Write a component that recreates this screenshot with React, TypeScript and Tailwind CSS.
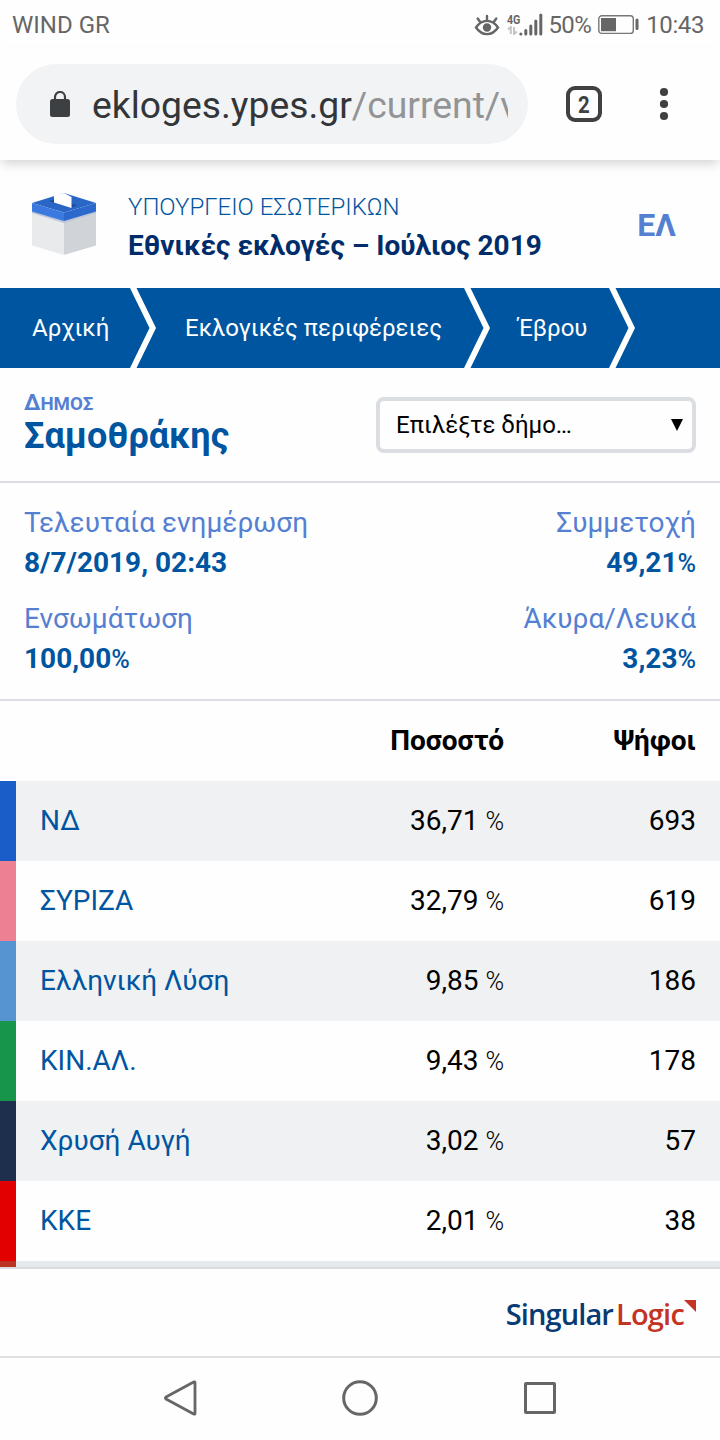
import { ReactNode, memo } from 'react'

interface Party {
    name: string
    percent: string
    votes: string
    color: string
}

const parties: Party[] = [
    { name: 'ΝΔ', percent: '36,71', votes: '693', color: 'bg-[#1a5cc8]' },
    { name: 'ΣΥΡΙΖΑ', percent: '32,79', votes: '619', color: 'bg-[#ee8094]' },
    {
        name: 'Ελληνική Λύση',
        percent: '9,85',
        votes: '186',
        color: 'bg-[#5694d1]',
    },
    { name: 'ΚΙΝ.ΑΛ.', percent: '9,43', votes: '178', color: 'bg-[#17954b]' },
    { name: 'Χρυσή Αυγή', percent: '3,02', votes: '57', color: 'bg-[#1e2e4d]' },
    { name: 'ΚΚΕ', percent: '2,01', votes: '38', color: 'bg-[#e30000]' },
]

const StatusBar = () => (
    <div className="flex h-12 items-center justify-between pt-px pr-4 pl-3 text-[24px] text-[#666]">
        <span>WIND GR</span>
        <div className="flex items-center">
            <svg
                width="26"
                height="24"
                viewBox="0 0 26 24"
                fill="none"
                stroke="#666"
                strokeWidth="2.4"
                strokeLinecap="round"
            >
                <path d="M2 14.5C8 5.7 18 5.7 24 14.5C18 23.3 8 23.3 2 14.5Z" />
                <path d="M13 7.5V3M6.2 9L3.7 5.5M19.8 9L22.3 5.5" />
                <circle cx="13" cy="14.5" r="4.2" fill="#666" stroke="none" />
            </svg>
            <div className="ml-[7px] flex h-6 w-[14px] flex-col">
                <span className="origin-left scale-x-[0.82] text-[13px] leading-[13px] font-bold">
                    4G
                </span>
                <svg
                    width="12"
                    height="9"
                    viewBox="0 0 12 9"
                    fill="none"
                    stroke="#c4c4c4"
                    strokeWidth="2"
                >
                    <path d="M1 3.5L3.8 1V8M7 1V8L9.8 5.5" />
                </svg>
            </div>
            <svg
                width="24"
                height="24"
                viewBox="0 0 24 24"
                stroke="#666"
                strokeWidth="3"
                strokeLinecap="round"
                overflow="visible"
            >
                <path d="M-0.2 21H-0.1M4.8 17.5V21M9.8 13V21M14.8 8V21M19.8 2V21" />
            </svg>
            <span className="ml-[3px] tracking-[-0.6px]">50%</span>
            <svg
                className="ml-[7px]"
                width="41"
                height="20"
                viewBox="0 0 41 20"
                fill="none"
            >
                <rect
                    x="0.8"
                    y="0.8"
                    width="34.5"
                    height="17.6"
                    rx="3"
                    stroke="#777"
                    strokeWidth="1.4"
                />
                <rect x="3" y="3" width="15" height="13.2" fill="#666" />
                <path
                    d="M39 5V13.5"
                    stroke="#666"
                    strokeWidth="3"
                    strokeLinecap="round"
                />
            </svg>
            <span className="ml-[7px] tracking-[-0.4px]">10:43</span>
        </div>
    </div>
)

const AddressBar = () => (
    <div className="relative z-10 flex h-28 items-start bg-[#fefefe] px-4 pt-4 shadow-[0_6px_10px_-2px_rgba(0,0,0,0.16)]">
        <div className="flex h-20 w-[512px] items-center rounded-full bg-[#f1f3f4] pr-5 pl-[34px]">
            <svg width="20" height="26" viewBox="0 0 20 26" fill="none">
                <rect y="8" width="20" height="18" rx="2.5" fill="#3c4043" />
                <path
                    d="M5 9V6a5 5 0 0 1 10 0V9"
                    stroke="#3c4043"
                    strokeWidth="2.2"
                />
            </svg>
            <div className="mt-px ml-[22px] flex-1 overflow-hidden text-[37.3px] leading-[48px] whitespace-nowrap text-[#333639]">
                ekloges.ypes.gr
                <span className="text-[#929496]">/current/v</span>
            </div>
        </div>
        <div className="mt-[22px] ml-[38px] flex h-9 w-9 items-center justify-center rounded-[9px] border-4 border-[#404040] pt-0.5 text-[24px] font-bold text-[#404040]">
            <span className="scale-x-[0.85]">2</span>
        </div>
        <svg
            className="mt-[22px] ml-[58px]"
            width="8"
            height="36"
            viewBox="0 0 8 36"
            fill="#404040"
            overflow="visible"
        >
            <circle cx="4" cy="6" r="4.1" />
            <circle cx="4" cy="18" r="4.1" />
            <circle cx="4" cy="30" r="4.1" />
        </svg>
    </div>
)

const BallotBox = () => (
    <svg width="64" height="64" viewBox="0 0 64 64">
        <path d="M0 18L32 28V62L0 52.500Z" fill="#e8eaec" />
        <path d="M64 18L32 28V62L64 52.500Z" fill="#d0d4d8" />
        <path d="M0 18L32 27L64 18V20L32 30L0 20Z" fill="#bac5da" />
        <path d="M32 0L64 10L32 19.500L0 10Z" fill="#2a66c6" />
        <path d="M0 10L32 19.500V28L0 18.500Z" fill="#3c79df" />
        <path d="M64 10L32 19.500V28L64 18.500Z" fill="#2d68cd" />
        <path d="M17 8L22 6.500L45 12L40 14.500Z" fill="#1e4a9b" />
        <path d="M22 2.500L32 0L39.500 4V15L22 9.500Z" fill="#fff" />
    </svg>
)

const SiteHeader = () => (
    <div className="flex h-32 items-start px-8">
        <div className="mt-[33px]">
            <BallotBox />
        </div>
        <div className="ml-8 flex-1 pt-[31px]">
            <div className="text-[24px] leading-8 font-light text-[#0055a0]">
                ΥΠΟΥΡΓΕΙΟ ΕΣΩΤΕΡΙΚΩΝ
            </div>
            <h1 className="mt-[3px] text-[28px] leading-10 font-bold whitespace-nowrap text-[#002d6a]">
                Εθνικές εκλογές – Ιούλιος 2019
            </h1>
        </div>
        <span className="mt-[45px] mr-3 text-[32px] leading-10 font-bold text-[#5580d2]">
            ΕΛ
        </span>
    </div>
)

const Chevron = () => (
    <svg
        className="shrink-0"
        width="26"
        height="80"
        viewBox="0 0 26 80"
        fill="#fff"
    >
        <path d="M0 0H6.500L26 40L6.500 80H0L19.500 40Z" />
    </svg>
)

const Breadcrumbs = () => (
    <nav className="flex h-20 items-center bg-[#0055a0] text-[24px] whitespace-nowrap text-white">
        <span className="w-[130px] pl-8">Αρχική</span>
        <Chevron />
        <span className="w-[308px] pl-[29px]">Εκλογικές περιφέρειες</span>
        <Chevron />
        <span className="w-[119px] pl-7">Έβρου</span>
        <Chevron />
    </nav>
)

const Municipality = () => (
    <div className="flex h-[115px] items-start justify-between border-b-2 border-[#dadee2] px-6">
        <div className="pt-[22px]">
            <div className="text-[22.4px] leading-6 font-bold text-[#5580d2]">
                Δ<span className="text-[18.7px]">ΗΜΟΣ</span>
            </div>
            <h2 className="-mt-px text-[36px] leading-[42px] font-bold text-[#0055a0]">
                Σαμοθράκης
            </h2>
        </div>
        <div className="mt-[29px] flex h-14 w-80 items-center justify-between rounded-lg border-4 border-[#dadee2] pr-[9px] pl-4 text-[24px] text-black">
            <span>Επιλέξτε δήμο…</span>
            <svg width="12" height="12" viewBox="0 0 12 12">
                <path d="M0 0H12L6 12Z" />
            </svg>
        </div>
    </div>
)

const Stat = ({
    label,
    children,
    right,
}: {
    label: string
    children: ReactNode
    right?: boolean
}) => (
    <div className={right ? 'text-right' : ''}>
        <div className="text-[28px] leading-10 text-[#5580d2]">{label}</div>
        <div className="text-[28px] leading-10 font-bold text-[#0055a0]">
            {children}
        </div>
    </div>
)

const Stats = () => (
    <div className="grid h-[218px] grid-cols-2 content-start gap-y-[15px] border-b-2 border-[#dadee2] px-6 pt-5">
        <Stat label="Τελευταία ενημέρωση">8/7/2019, 02:43</Stat>
        <Stat label="Συμμετοχή" right>
            49,21
            <span className="text-[25.2px] font-medium">%</span>
        </Stat>
        <Stat label="Ενσωμάτωση">
            100,00
            <span className="text-[25.2px] font-medium">%</span>
        </Stat>
        <Stat label="Άκυρα/Λευκά" right>
            3,23
            <span className="text-[25.2px] font-medium">%</span>
        </Stat>
    </div>
)

const Results = memo(() => (
    <div className="text-[28px] leading-10">
        <div className="flex h-20 items-center pr-6 text-right font-bold text-black">
            <span className="w-[504px]">Ποσοστό</span>
            <span className="flex-1">Ψήφοι</span>
        </div>
        {parties.map((party) => (
            <div
                key={party.name}
                className="flex h-20 items-center pr-6 text-black odd:bg-[#fefefe] even:bg-[#eff1f3]"
            >
                <div className={`h-full w-4 ${party.color}`} />
                <span className="w-[260px] pl-6 text-[#0055a0]">
                    {party.name}
                </span>
                <span className="w-[228px] text-right">
                    {party.percent}{' '}
                    <span className="text-[25.2px] font-light">%</span>
                </span>
                <span className="flex-1 text-right">{party.votes}</span>
            </div>
        ))}
        {/* Top of the next row, under the footer */}
        <div className="flex h-1.5 bg-[#e6e9eb]">
            <div className="w-4 bg-[#b93222]" />
        </div>
    </div>
))

Results.displayName = 'Results'

const Footer = () => (
    <div className="flex h-[89px] justify-end border-t-2 border-[#d9dde0] pr-6">
        <div className="flex pt-[25px] font-['Open_Sans',sans-serif] text-[29px] leading-10 font-semibold">
            <span className="tracking-[-0.9px] text-[#083a74]">Singular</span>
            <span className="ml-[3px] tracking-[-0.8px] text-[#c43424]">
                Logic
            </span>
        </div>
        <svg className="mt-[31px]" width="12" height="12" viewBox="0 0 12 12">
            <path d="M0 0H12V12Z" fill="#c43424" />
        </svg>
    </div>
)

const SystemNav = () => (
    <div className="flex h-[84px] justify-center gap-36 border-t-2 border-[#e0e0e0] pt-[22px]">
        <svg
            width="36"
            height="36"
            viewBox="0 0 36 36"
            fill="none"
            stroke="#666"
            strokeWidth="2.8"
            strokeLinejoin="round"
        >
            <path d="M33 2.500C33 1.800 32.300 1.600 31.700 2L4 17Q3 18 4 19L31.700 34C32.300 34.400 33 34.200 33 33.500Z" />
        </svg>
        <svg
            width="36"
            height="36"
            viewBox="0 0 36 36"
            fill="none"
            stroke="#666"
            strokeWidth="3"
        >
            <circle cx="18" cy="18" r="16.3" />
        </svg>
        <svg
            width="36"
            height="36"
            viewBox="0 0 36 36"
            fill="none"
            stroke="#666"
            strokeWidth="3"
            strokeLinejoin="round"
        >
            <rect x="3.500" y="3.500" width="29" height="29" rx="0.5" />
        </svg>
    </div>
)

export default function App() {
    return (
        <div className="h-[1440px] w-[720px] overflow-hidden bg-[#fefefe] font-[Roboto,'Noto_Sans',sans-serif]">
            <StatusBar />
            <AddressBar />
            <SiteHeader />
            <Breadcrumbs />
            <Municipality />
            <Stats />
            <Results />
            <Footer />
            <SystemNav />
        </div>
    )
}
